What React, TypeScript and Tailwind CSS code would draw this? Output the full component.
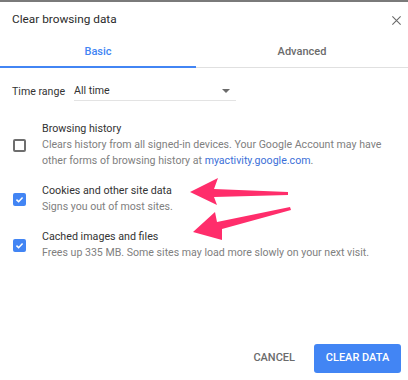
import React from "react";

function Checkbox({ checked }: { checked: boolean }) {
  if (checked) {
    return (
      <div className="w-[13px] h-[13px] rounded-[2px] bg-[#4285f4] flex items-center justify-center">
        <svg width="9" height="9" viewBox="0 0 10 10">
          <path d="M1.6 5.2 L4 7.4 L8.4 2.8" stroke="white" strokeWidth="1.7" fill="none" />
        </svg>
      </div>
    );
  }
  return <div className="w-[13px] h-[13px] rounded-[2px] border-2 border-[#6e6e6e]" />;
}

function Item({
  checked,
  title,
  children,
}: {
  checked: boolean;
  title: string;
  children: React.ReactNode;
}) {
  return (
    <div className="flex items-center">
      <div className="w-[42px] pl-[13px] shrink-0">
        <Checkbox checked={checked} />
      </div>
      <div className="flex flex-col">
        <div className="text-[10.7px] leading-[16px] text-[#333]">{title}</div>
        <div className="text-[10.6px] leading-[16px] text-[#808080]">{children}</div>
      </div>
    </div>
  );
}

export default function App() {
  return (
    <div
      className="relative w-[408px] h-[380px] bg-white overflow-hidden"
      style={{ fontFamily: "Roboto, 'Liberation Sans', sans-serif" }}
    >
      <div className="h-[2px] bg-[#7a7a7a]" />
      <div className="flex items-center justify-between h-[36px] pl-[12px] pr-[6px]">
        <div className="text-[11.8px] text-[#2b2b2b]">Clear browsing data</div>
        <svg width="11" height="11" viewBox="0 0 12 12">
          <path d="M1.5 1.5 L10.5 10.5 M10.5 1.5 L1.5 10.5" stroke="#6b6b6b" strokeWidth="1.2" />
        </svg>
      </div>
      <div className="flex h-[30px] border-b border-[#e0e0e0]">
        <div className="w-[196px] flex items-center justify-center border-b-2 border-[#4285f4] text-[11px] font-medium text-[#4285f4] -mb-[1px]">
          Basic
        </div>
        <div className="flex-1 flex items-center justify-center text-[11px] font-medium text-[#6b6b6b]">
          Advanced
        </div>
      </div>
      <div className="flex items-center pl-[12px] mt-[14px] h-[19px]">
        <div className="text-[10.6px] text-[#333] w-[62px]">Time range</div>
        <div className="w-[162px] h-[19px] border-b border-[#e3e3e3] flex items-center justify-between pr-[6px]">
          <span className="text-[10.6px] text-[#333]">All time</span>
          <svg width="8" height="4" viewBox="0 0 8 4">
            <path d="M0 0 L8 0 L4 4 Z" fill="#6b6b6b" />
          </svg>
        </div>
      </div>
      <div className="flex flex-col gap-[14px] mt-[20px]">
        <Item checked={false} title="Browsing history">
          Clears history from all signed-in devices. Your Google Account may have
          <br />
          other forms of browsing history at{" "}
          <span className="text-[#3b6fd8]">myactivity.google.com</span>.
        </Item>
        <Item checked={true} title="Cookies and other site data">
          Signs you out of most sites.
        </Item>
        <Item checked={true} title="Cached images and files">
          Frees up 335 MB. Some sites may load more slowly on your next visit.
        </Item>
      </div>
      <div className="absolute left-0 right-0 bottom-[7px] flex justify-end items-center pr-[7px] gap-[19px]">
        <button className="text-[11px] font-medium text-[#6b6b6b]">CANCEL</button>
        <button className="w-[87px] h-[29px] rounded-[3px] bg-[#4285f4] text-white text-[11px] font-medium">
          CLEAR DATA
        </button>
      </div>
      <svg className="absolute left-0 top-0 pointer-events-none" width="408" height="380">
        <polygon
          points="190,192 218,178 214,189 288,192 288,195 214,197 217,205"
          fill="#ff2d6b"
        />
        <polygon
          points="193,232 215,212 217,222 290,207 291,210 222,229 222,240"
          fill="#ff2d6b"
        />
      </svg>
    </div>
  );
}
